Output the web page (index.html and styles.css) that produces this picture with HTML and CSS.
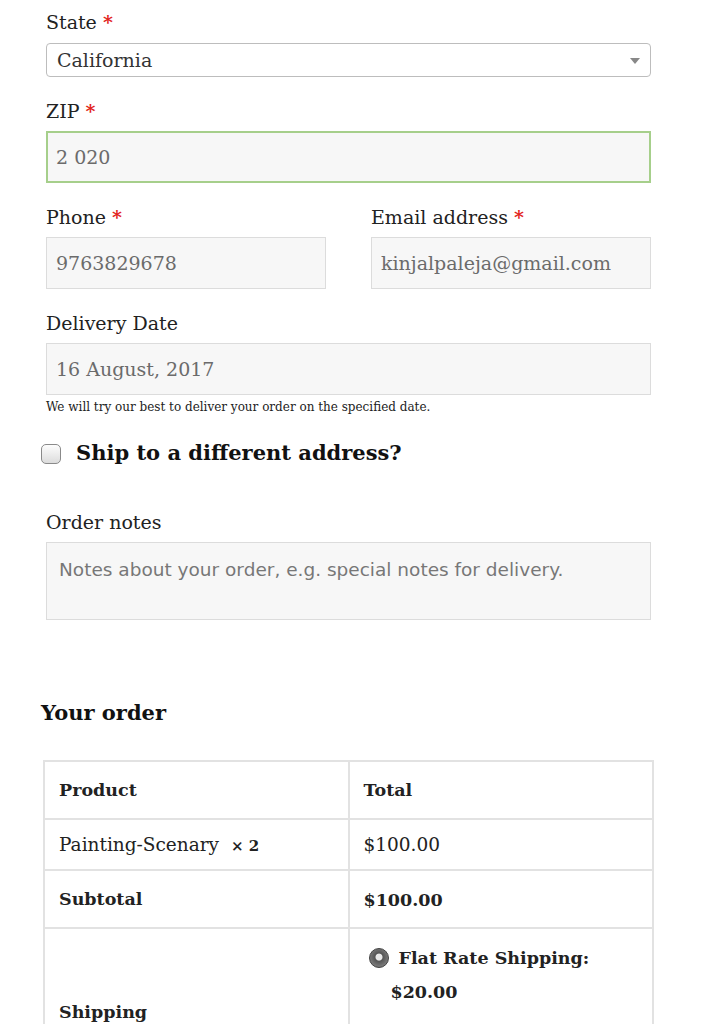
FILE: index.html
```html
<!DOCTYPE html>
<html>
<head>
<meta charset="utf-8">
<link rel="stylesheet" href="styles.css">
</head>
<body>
<div class="page">
  <div class="field">
    <label class="lbl">State <span class="req">*</span></label>
    <div class="select">
      <span>California</span>
      <span class="arrow"></span>
    </div>
  </div>
  <div class="field">
    <label class="lbl">ZIP <span class="req">*</span></label>
    <div class="input valid">2 020</div>
  </div>
  <div class="field cols">
    <div class="col">
      <label class="lbl">Phone <span class="req">*</span></label>
      <div class="input">9763829678</div>
    </div>
    <div class="col">
      <label class="lbl">Email address <span class="req">*</span></label>
      <div class="input">kinjalpaleja@gmail.com</div>
    </div>
  </div>
  <div class="field date">
    <label class="lbl">Delivery Date</label>
    <div class="input">16 August, 2017</div>
    <p class="help">We will try our best to deliver your order on the specified date.</p>
  </div>
  <h3 class="ship"><span class="checkbox"></span><span>Ship to a different address?</span></h3>
  <div class="field">
    <label class="lbl">Order notes</label>
    <div class="textarea">Notes about your order, e.g. special notes for delivery.</div>
  </div>
  <h3 class="your-order">Your order</h3>
  <table class="order">
    <tr class="head">
      <th>Product</th>
      <th>Total</th>
    </tr>
    <tr class="item">
      <td>Painting-Scenary <strong class="qty">&times; 2</strong></td>
      <td>$100.00</td>
    </tr>
    <tr class="sub">
      <th>Subtotal</th>
      <td><strong>$100.00</strong></td>
    </tr>
    <tr class="shipping">
      <th>Shipping</th>
      <td>
        <div class="method">
          <span class="radio"></span>
          <span class="mlabel">Flat Rate Shipping:<br><span class="price">$20.00</span></span>
        </div>
      </td>
    </tr>
  </table>
</div>
</body>
</html>
```

FILE: styles.css
```css
html, body {
  margin: 0;
  padding: 0;
  background: #fff;
}
body {
  font-family: "DejaVu Serif", "Liberation Serif", serif;
  color: #222;
}
.page {
  width: 605px;
  padding: 7px 53px 0 46px;
}
.field {
  margin-bottom: 19px;
}
.lbl {
  display: block;
  font-size: 19px;
  line-height: 30px;
  margin-bottom: 5px;
  color: #222;
}
.req {
  color: #e2231a;
  font-weight: bold;
}
.select {
  box-sizing: border-box;
  height: 34px;
  border: 1px solid #bdbdbd;
  border-radius: 4px;
  background: #fff;
  display: flex;
  align-items: center;
  justify-content: space-between;
  padding: 0 10px 0 10px;
  font-size: 19px;
  color: #333;
  margin-top: 6px;
}
.arrow {
  width: 0;
  height: 0;
  border-left: 5px solid transparent;
  border-right: 5px solid transparent;
  border-top: 6px solid #888;
  margin-top: 2px;
}
.input {
  box-sizing: border-box;
  height: 52px;
  border: 1px solid #dcdcdc;
  background: #f7f7f7;
  display: flex;
  align-items: center;
  padding: 0 9px;
  font-size: 19px;
  color: #6b6b6b;
}
.input.valid {
  border: 2px solid #a6cf8b;
  padding: 0 8px;
}
.cols {
  display: flex;
  gap: 45px;
}
.col {
  flex: 1;
}
.date {
  margin-bottom: 0;
}
.help {
  margin: 3px 0 0 0;
  font-size: 12px;
  line-height: 18px;
  color: #222;
}
.ship {
  display: flex;
  align-items: center;
  margin: 22px 0 0 -5px;
  font-size: 21px;
  line-height: 30px;
  font-weight: bold;
  color: #111;
}
.checkbox {
  box-sizing: border-box;
  width: 20px;
  height: 20px;
  border: 1px solid #8a8a8a;
  border-radius: 5px;
  background: linear-gradient(#fdfdfd, #dcdcdc);
  margin-right: 15px;
  margin-top: 2px;
}
.ship + .field {
  margin-top: 39px;
}
.textarea {
  box-sizing: border-box;
  height: 78px;
  border: 1px solid #dcdcdc;
  background: #f7f7f7;
  padding: 15px 12px;
  font-family: "DejaVu Sans", "Open Sans", sans-serif;
  font-size: 18.5px;
  line-height: 24px;
  color: #777;
}
.your-order {
  margin: 78px 0 0 -5px;
  font-size: 21px;
  line-height: 30px;
  font-weight: bold;
  color: #111;
}
.order {
  margin: 32px 0 0 -3px;
  width: 611px;
  border-collapse: collapse;
  table-layout: fixed;
  font-size: 17.5px;
  color: #222;
}
.order th, .order td {
  border: 2px solid #e2e2e2;
  text-align: left;
  padding: 0 14px;
  vertical-align: middle;
}
.order th {
  font-weight: bold;
}
.order td {
  font-size: 18.5px;
}
.order td strong {
  font-size: 17.5px;
}
.order .head th {
  height: 56px;
}
.order .item td {
  height: 49px;
}
.order .sub th, .order .sub td {
  height: 56px;
}
.order .shipping th, .order .shipping td {
  height: 150px;
}
.order .shipping td {
  vertical-align: top;
  padding-top: 16px;
  font-size: 17.5px;
}
.order td .qty {
  font-size: 15px;
  margin-left: 6px;
}
.method {
  display: flex;
  align-items: flex-start;
}
.radio {
  box-sizing: border-box;
  width: 20px;
  height: 20px;
  border-radius: 50%;
  background: radial-gradient(circle at 50% 45%, #e8e8e8 0 3px, #555 4px, #777 9px);
  border: 1px solid #444;
  margin: 3px 10px 0 5px;
  flex: none;
}
.mlabel {
  font-weight: bold;
  line-height: 34px;
  margin-top: -4px;
}
.price {
  margin-left: -8px;
}
```
